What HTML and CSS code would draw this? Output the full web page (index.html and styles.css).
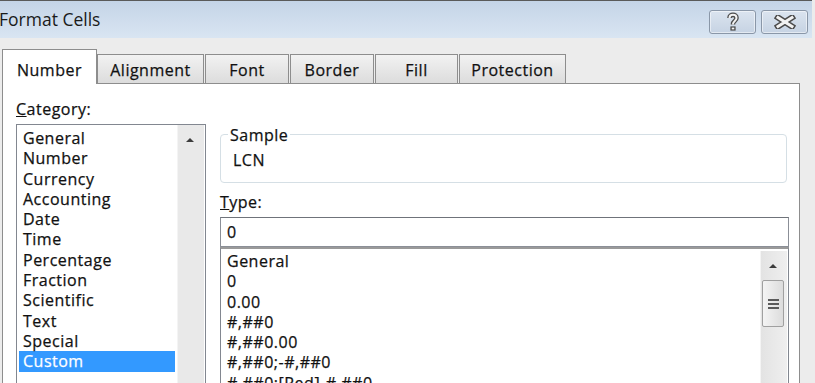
FILE: index.html
```html
<!DOCTYPE html>
<html lang="en">
<head>
    <meta charset="UTF-8">
    <title>Format Cells</title>
    <link rel="stylesheet" href="styles.css">
</head>
<body>
<div class="window">
    <div class="titlebar">
        <div class="title">Format Cells</div>
        <div class="capbtns">
            <div class="capbtn">
                <svg width="14" height="20" viewBox="0 0 14 20">
                    <path d="M3.5 6 C3.5 1.8 10.5 1.8 10.5 6 C10.5 8.8 7 9 7 12 L7 12.5" fill="none" stroke="#4a4a4a" stroke-width="4.6"/>
                    <rect x="4.4" y="14.4" width="5.2" height="4.2" fill="#4a4a4a"/>
                    <path d="M3.5 6 C3.5 1.8 10.5 1.8 10.5 6 C10.5 8.8 7 9 7 12 L7 12.5" fill="none" stroke="#f2f2f2" stroke-width="2"/>
                    <rect x="5.7" y="15.6" width="2.6" height="1.8" fill="#f2f2f2"/>
                </svg>
            </div>
            <div class="capbtn">
                <svg width="22" height="14" viewBox="0 0 22 14">
                    <path d="M4 2.5 L18 11.5 M18 2.5 L4 11.5" stroke="#4a4a4a" stroke-width="6" stroke-linecap="square"/>
                    <path d="M4 2.5 L18 11.5 M18 2.5 L4 11.5" stroke="#f2f2f2" stroke-width="3" stroke-linecap="square"/>
                </svg>
            </div>
        </div>
    </div>

    <div class="body">
        <div class="tabs">
            <div class="tab active">Number</div>
            <div class="tab w-align">Alignment</div>
            <div class="tab w-font">Font</div>
            <div class="tab w-border">Border</div>
            <div class="tab w-fill">Fill</div>
            <div class="tab w-prot">Protection</div>
        </div>

        <div class="panel">
            <div class="leftcol">
                <div class="label"><u>C</u>ategory:</div>
                <div class="listbox catlist">
                    <div class="items">
                        <div class="item">General</div>
                        <div class="item">Number</div>
                        <div class="item">Currency</div>
                        <div class="item">Accounting</div>
                        <div class="item">Date</div>
                        <div class="item">Time</div>
                        <div class="item">Percentage</div>
                        <div class="item">Fraction</div>
                        <div class="item">Scientific</div>
                        <div class="item">Text</div>
                        <div class="item">Special</div>
                        <div class="item selected">Custom</div>
                    </div>
                    <div class="scrollbar">
                        <div class="arrow"></div>
                    </div>
                </div>
            </div>

            <div class="rightcol">
                <div class="sample">
                    <span class="legend">Sample</span>
                    <div class="sampletext">LCN</div>
                </div>
                <div class="label typelabel"><u>T</u>ype:</div>
                <div class="typeinput">0</div>
                <div class="listbox typelist">
                    <div class="items">
                        <div class="item">General</div>
                        <div class="item">0</div>
                        <div class="item">0.00</div>
                        <div class="item">#,##0</div>
                        <div class="item">#,##0.00</div>
                        <div class="item">#,##0;-#,##0</div>
                        <div class="item">#,##0;[Red]-#,##0</div>
                    </div>
                    <div class="scrollbar">
                        <div class="arrow"></div>
                        <div class="thumb">
                            <span></span><span></span><span></span>
                        </div>
                    </div>
                </div>
            </div>
        </div>
    </div>
</div>
</body>
</html>
```

FILE: styles.css
```css
html, body{
    margin:0;
    padding:0;
    height:100%;
    overflow:hidden;
}
body{
    background:#ececec;
    font-family:"Open Sans", "Noto Sans", sans-serif;
    color:#111;
}
.window{
    width:812px;
    height:383px;
    display:flex;
    flex-direction:column;
}

/* caption */
.titlebar{
    height:37px;
    border-top:1px solid #5a5a5a;
    background:linear-gradient(#c4d4e7, #d9e5f2);
    display:flex;
    align-items:center;
    justify-content:space-between;
    flex-shrink:0;
}
.title{
    font-size:17.5px;
    color:#1a1a1a;
    margin-left:-1px;
    margin-top:-2px;
}
.capbtns{
    display:flex;
    gap:5px;
    margin-right:4px;
    margin-top:4px;
}
.capbtn{
    width:45px;
    height:22px;
    border:1px solid #8a97a8;
    border-radius:3px;
    background:linear-gradient(#dbe4ef, #c6d3e3);
    box-shadow:inset 0 0 0 1px rgba(255,255,255,0.5);
    display:flex;
    align-items:center;
    justify-content:center;
}

/* tabs */
.body{
    flex:1;
    padding:12px 12px 0 2px;
    display:flex;
    flex-direction:column;
}
.tabs{
    display:flex;
    align-items:flex-end;
    height:33px;
    gap:1px;
    position:relative;
    z-index:1;
}
.tab{
    height:29px;
    border:1px solid #8d8d8d;
    border-bottom:none;
    background:linear-gradient(#f2f2f2, #dcdcdc);
    font-size:16px;
    letter-spacing:0.5px;
    -webkit-text-stroke:0.25px #111;
    display:flex;
    align-items:center;
    justify-content:center;
    box-sizing:border-box;
    padding-top:1px;
}
.tab.active{
    width:95px;
    height:35px;
    background:#fff;
    margin-bottom:-1px;
    margin-right:-1px;
    padding-top:6px;
}
.w-align{ width:107px; }
.w-font{ width:84px; }
.w-border{ width:84px; }
.w-fill{ width:83px; }
.w-prot{ width:107px; }

.panel{
    flex:1;
    background:#fff;
    border:1px solid #8d8d8d;
    border-bottom:none;
    display:flex;
    gap:14px;
    padding:0 0 0 13px;
    min-height:0;
}

.label, .items, .legend, .sampletext, .typeinput{
    font-size:16px;
    letter-spacing:0.5px;
    -webkit-text-stroke:0.25px currentColor;
}
.label{
    line-height:20px;
}
.leftcol{
    width:190px;
    display:flex;
    flex-direction:column;
    padding-top:15px;
}
.leftcol .label{
    margin-bottom:5px;
}

.listbox{
    flex:1;
    border:1px solid #828790;
    border-bottom:none;
    display:flex;
    min-height:0;
    overflow:hidden;
}
.items{
    flex:1;
    padding:3px 2px 0 2px;
    line-height:20.3px;
}
.item{
    padding-left:4px;
    white-space:nowrap;
}
.item.selected{
    background:#3399ff;
    color:#fff;
}
.scrollbar{
    width:26px;
    background:#e9e9e9;
    border-left:1px solid #f4f4f4;
    position:relative;
    margin:1px 1px 0 0;
}
.arrow{
    position:absolute;
    left:8px;
    top:13px;
    width:0;
    height:0;
    border-left:4px solid transparent;
    border-right:4px solid transparent;
    border-bottom:4px solid #3c3c3c;
}
.catlist .scrollbar{
    margin-top:0;
}

/* right side */
.rightcol{
    width:569px;
    display:flex;
    flex-direction:column;
    padding-top:50px;
}
.sample{
    height:47px;
    border:1px solid #d5dfe5;
    border-radius:4px;
    margin-right:2px;
    position:relative;
}
.legend{
    position:absolute;
    left:7px;
    top:-10px;
    background:#fff;
    padding:0 2px;
    line-height:20px;
}
.sampletext{
    line-height:20px;
    padding:15px 0 0 12px;
}
.typelabel{
    margin-top:9px;
}
.typeinput{
    height:28px;
    margin-top:5px;
    border:1px solid #8b8f97;
    border-top-color:#6f737a;
    line-height:28px;
    padding-left:6px;
}
.typelist{
    border-top:2px solid #9a9a9a;
}
.typelist .items{
    padding-top:2px;
}
.typelist .scrollbar{
    margin-top:2px;
    background:linear-gradient(90deg, #e3e3e3, #efefef);
}
.thumb{
    position:absolute;
    left:1px;
    top:29px;
    width:20px;
    height:45px;
    border:1px solid #a0a0a0;
    border-radius:2px;
    background:linear-gradient(90deg, #f4f4f4, #dcdcdc);
    display:flex;
    flex-direction:column;
    align-items:center;
    justify-content:center;
    gap:2px;
}
.thumb span{
    width:11px;
    height:2px;
    background:#5a5a5a;
}
```
